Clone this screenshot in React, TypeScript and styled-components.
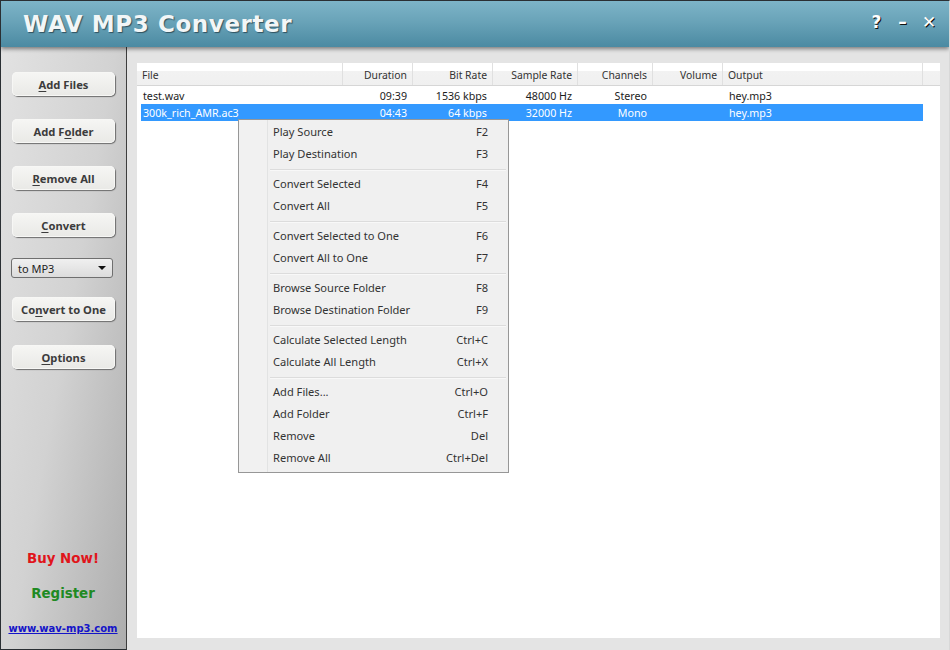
import React from "react";
import styled, { createGlobalStyle } from "styled-components";

const GlobalStyle = createGlobalStyle`
  html, body {
    margin: 0;
    padding: 0;
    background: #e4e4e4;
  }
  * {
    box-sizing: border-box;
  }
`;

const uiFont = `"Noto Sans", "Open Sans", sans-serif`;

type Column = {
  title: string;
  width: number;
  align: "left" | "right" | "center";
};

const columns: Column[] = [
  { title: "File", width: 206, align: "left" },
  { title: "Duration", width: 70, align: "right" },
  { title: "Bit Rate", width: 80, align: "right" },
  { title: "Sample Rate", width: 85, align: "right" },
  { title: "Channels", width: 75, align: "right" },
  { title: "Volume", width: 70, align: "right" },
  { title: "Output", width: 200, align: "left" },
];

const files = [
  ["test.wav", "09:39", "1536 kbps", "48000 Hz", "Stereo", "", "hey.mp3"],
  ["300k_rich_AMR.ac3", "04:43", "64 kbps", "32000 Hz", "Mono", "", "hey.mp3"],
];

const menuGroups = [
  [
    ["Play Source", "F2"],
    ["Play Destination", "F3"],
  ],
  [
    ["Convert Selected", "F4"],
    ["Convert All", "F5"],
  ],
  [
    ["Convert Selected to One", "F6"],
    ["Convert All to One", "F7"],
  ],
  [
    ["Browse Source Folder", "F8"],
    ["Browse Destination Folder", "F9"],
  ],
  [
    ["Calculate Selected Length", "Ctrl+C"],
    ["Calculate All Length", "Ctrl+X"],
  ],
  [
    ["Add Files...", "Ctrl+O"],
    ["Add Folder", "Ctrl+F"],
    ["Remove", "Del"],
    ["Remove All", "Ctrl+Del"],
  ],
];

export default function App() {
  return (
    <>
      <GlobalStyle />
      <Window>
        <Header>
          <Title>WAV MP3 Converter</Title>
          <WindowControls>
            <ControlGlyph>?</ControlGlyph>
            <ControlGlyph>–</ControlGlyph>
            <ControlGlyph>✕</ControlGlyph>
          </WindowControls>
        </Header>
        <Body>
          <Sidebar>
            <SideButton>
              <u>A</u>dd Files
            </SideButton>
            <SideButton>
              Add F<u>o</u>lder
            </SideButton>
            <SideButton>
              <u>R</u>emove All
            </SideButton>
            <SideButton>
              <u>C</u>onvert
            </SideButton>
            <FormatSelect>
              <span>to MP3</span>
              <SelectArrow />
            </FormatSelect>
            <SideButton $gap={24}>
              Co<u>n</u>vert to One
            </SideButton>
            <SideButton>
              <u>O</u>ptions
            </SideButton>
            <Promo>
              <BuyNow>Buy Now!</BuyNow>
              <Register>Register</Register>
              <SiteLink href="#">www.wav-mp3.com</SiteLink>
            </Promo>
          </Sidebar>
          <Content>
            <FileList>
              <ListHeader>
                {columns.map((col) => (
                  <HeaderCell key={col.title} $width={col.width} $align={col.align}>
                    {col.title}
                  </HeaderCell>
                ))}
                <HeaderFiller />
              </ListHeader>
              <Rows>
                {files.map((row, i) => (
                  <Row key={row[0]} $selected={i === 1}>
                    {row.map((value, c) => (
                      <Cell
                        key={c}
                        $width={c === 0 ? columns[c].width - 4 : columns[c].width}
                        $align={columns[c].align}
                      >
                        {value}
                      </Cell>
                    ))}
                  </Row>
                ))}
              </Rows>
              <ContextMenu>
                {menuGroups.map((group, g) => (
                  <React.Fragment key={g}>
                    {g > 0 && <MenuSeparator />}
                    {group.map(([label, key]) => (
                      <MenuItem key={label}>
                        <span>{label}</span>
                        <span>{key}</span>
                      </MenuItem>
                    ))}
                  </React.Fragment>
                ))}
              </ContextMenu>
            </FileList>
          </Content>
        </Body>
      </Window>
    </>
  );
}

const Window = styled.div`
  width: 950px;
  height: 650px;
  display: flex;
  flex-direction: column;
  overflow: hidden;
  border-top: 1px solid #2a2f33;
  border-left: 1px solid #2a2f33;
  border-right: 1px solid #d8d8d8;
  font-family: ${uiFont};
  font-size: 11px;
  color: #1c1c1c;
`;

const Header = styled.header`
  height: 46px;
  flex-shrink: 0;
  display: flex;
  align-items: center;
  justify-content: space-between;
  padding: 0 14px 0 22px;
  background: linear-gradient(180deg, #7db4c8 0%, #69a3b8 45%, #4b8aa2 100%);
  box-shadow: 0 2px 4px rgba(0, 0, 0, 0.45);
  position: relative;
  z-index: 1;
`;

const Title = styled.h1`
  margin: 0;
  font-family: "DejaVu Sans", sans-serif;
  font-size: 23px;
  font-weight: 700;
  letter-spacing: 0.6px;
  color: #f2f6f7;
  text-shadow: 1px 1px 1px #30515f;
`;

const WindowControls = styled.div`
  display: flex;
  gap: 13px;
  margin-bottom: 4px;
`;

const ControlGlyph = styled.span`
  width: 13px;
  text-align: center;
  font-family: "DejaVu Sans", sans-serif;
  font-size: 17px;
  font-weight: 700;
  color: #ffffff;
  text-shadow: 1px 1px 0 #111111;
`;

const Body = styled.div`
  flex: 1;
  display: flex;
  min-height: 0;
`;

const Sidebar = styled.aside`
  width: 126px;
  flex-shrink: 0;
  display: flex;
  flex-direction: column;
  align-items: flex-start;
  padding: 25px 0 15px 11px;
  border-right: 1px solid #3d3d3d;
  border-bottom: 1px solid #2a2f33;
  background: linear-gradient(100deg, #e2e2e2 0%, #d2d2d2 50%, #adadad 100%);
`;

const SideButton = styled.button<{ $gap?: number }>`
  width: 103px;
  height: 24px;
  flex-shrink: 0;
  margin-bottom: ${(p) => p.$gap ?? 23}px;
  padding: 0;
  border: none;
  border-radius: 5px;
  background: linear-gradient(180deg, #f6f6f4 0%, #e9e9e6 100%);
  box-shadow: 1px 1px 1px #6d6d6d, inset 0 0 0 1px #f7f7f5;
  font-family: ${uiFont};
  font-size: 11.2px;
  font-weight: 700;
  color: #3c3c3c;

  u {
    text-underline-offset: 2px;
  }
`;

const FormatSelect = styled.div`
  width: 102px;
  height: 20px;
  flex-shrink: 0;
  margin: -2px 0 19px -1px;
  padding: 0 6px;
  display: flex;
  align-items: center;
  justify-content: space-between;
  border: 1px solid #6f6f6f;
  border-radius: 3px;
  background: linear-gradient(180deg, #f0f0f0 0%, #dcdcdc 100%);
  font-size: 11px;
  color: #222222;
`;

const SelectArrow = styled.i`
  width: 0;
  height: 0;
  border-left: 4px solid transparent;
  border-right: 4px solid transparent;
  border-top: 4px solid #111111;
`;

const Promo = styled.div`
  margin-top: auto;
  width: 102px;
  display: flex;
  flex-direction: column;
  align-items: center;
`;

const BuyNow = styled.div`
  font-family: "DejaVu Sans", sans-serif;
  font-size: 13.4px;
  font-weight: 700;
  color: #e0151b;
`;

const Register = styled.div`
  margin-top: 20px;
  font-family: "DejaVu Sans", sans-serif;
  font-size: 13.4px;
  font-weight: 700;
  color: #1f8a23;
`;

const SiteLink = styled.a`
  margin-top: 22px;
  white-space: nowrap;
  font-family: "DejaVu Sans", sans-serif;
  font-size: 10px;
  font-weight: 700;
  color: #1414c8;
`;

const Content = styled.main`
  flex: 1;
  padding: 16px 9px 12px 10px;
  background: #e4e4e4;
`;

const FileList = styled.section`
  position: relative;
  height: 100%;
  background: #ffffff;
`;

const ListHeader = styled.div`
  height: 23px;
  display: flex;
  background: linear-gradient(180deg, #ffffff 0%, #ffffff 35%, #f2f2f2 36%, #f0f0f0 100%);
  border-bottom: 1px solid #d6d6d6;
`;

const HeaderCell = styled.div<{ $width: number; $align: string }>`
  width: ${(p) => p.$width}px;
  flex-shrink: 0;
  padding: 0 5px;
  font-size: 10.4px;
  line-height: 24px;
  text-align: ${(p) => p.$align};
  border-right: 1px solid #e0e0e0;
  color: #333333;
`;

const HeaderFiller = styled.div`
  flex: 1;
`;

const Rows = styled.div`
  padding-top: 1px;
`;

const Row = styled.div<{ $selected: boolean }>`
  width: 782px;
  height: 17px;
  margin-left: 4px;
  display: flex;
  background: ${(p) => (p.$selected ? "#3399ff" : "transparent")};
  color: ${(p) => (p.$selected ? "#ffffff" : "#1c1c1c")};
`;

const Cell = styled.div<{ $width: number; $align: string }>`
  width: ${(p) => p.$width}px;
  flex-shrink: 0;
  padding: 1px 6px 0;
  font-size: 10.7px;
  line-height: 17px;
  white-space: nowrap;
  text-align: ${(p) => p.$align};

  &:first-child {
    padding-left: 2px;
  }
`;

const ContextMenu = styled.div`
  position: absolute;
  left: 101px;
  top: 56px;
  width: 271px;
  padding: 2px;
  border: 1px solid #979797;
  background: linear-gradient(90deg, #f1f1f1 0, #f1f1f1 28px, #e2e3e3 28px, #e2e3e3 29px, #f0f0f0 29px);
  font-size: 11.1px;
  color: #333333;
`;

const MenuItem = styled.div`
  height: 22px;
  padding: 0 18px 3px 32px;
  display: flex;
  align-items: center;
  justify-content: space-between;
`;

const MenuSeparator = styled.div`
  height: 2px;
  margin: 3px 0 3px 29px;
  background: #dcdcdc;
  border-bottom: 1px solid #f8f8f8;
`;
